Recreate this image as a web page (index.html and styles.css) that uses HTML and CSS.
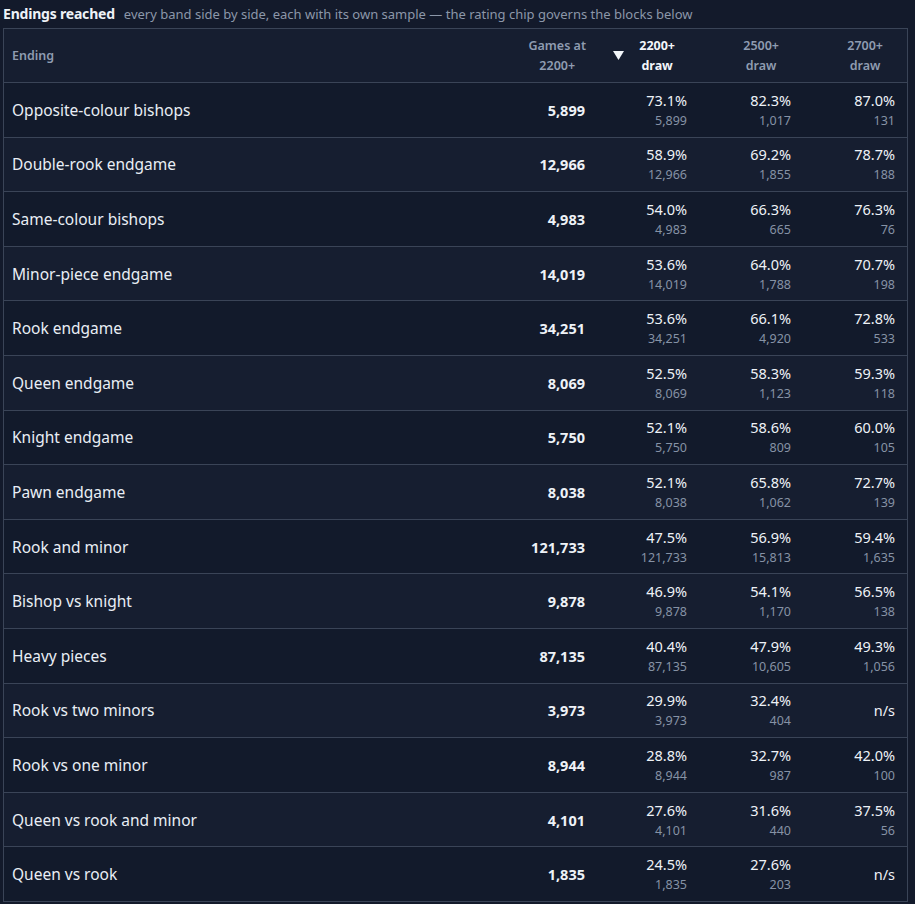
FILE: index.html
```html
<!DOCTYPE html>
<html>
<head>
<meta charset="utf-8">
<link rel="stylesheet" href="styles.css">
</head>
<body>
<div class="panel">
  <div class="title"><span class="title-main">Endings reached</span><span class="title-sub">every band side by side, each with its own sample — the rating chip governs the blocks below</span></div>
  <table class="grid">
    <thead>
      <tr>
        <th class="h-name">Ending</th>
        <th class="h-num h-games"><span class="h-txt">Games at<br>2200+</span></th>
        <th class="h-num h-draw h-active"><svg class="arrow" width="11" height="9" viewBox="0 0 11 9"><path d="M0 0 H11 L5.5 9 Z" fill="#f3f6fa"/></svg><span class="h-txt">2200+<br>draw</span></th>
        <th class="h-num h-draw"><span class="h-txt">2500+<br>draw</span></th>
        <th class="h-num h-draw"><span class="h-txt">2700+<br>draw</span></th>
      </tr>
    </thead>
    <tbody>
      <tr><td class="name">Opposite-colour bishops</td><td class="games">5,899</td><td class="pct"><div class="p">73.1%</div><div class="n">5,899</div></td><td class="pct"><div class="p">82.3%</div><div class="n">1,017</div></td><td class="pct"><div class="p">87.0%</div><div class="n">131</div></td></tr>
      <tr><td class="name">Double-rook endgame</td><td class="games">12,966</td><td class="pct"><div class="p">58.9%</div><div class="n">12,966</div></td><td class="pct"><div class="p">69.2%</div><div class="n">1,855</div></td><td class="pct"><div class="p">78.7%</div><div class="n">188</div></td></tr>
      <tr><td class="name">Same-colour bishops</td><td class="games">4,983</td><td class="pct"><div class="p">54.0%</div><div class="n">4,983</div></td><td class="pct"><div class="p">66.3%</div><div class="n">665</div></td><td class="pct"><div class="p">76.3%</div><div class="n">76</div></td></tr>
      <tr><td class="name">Minor-piece endgame</td><td class="games">14,019</td><td class="pct"><div class="p">53.6%</div><div class="n">14,019</div></td><td class="pct"><div class="p">64.0%</div><div class="n">1,788</div></td><td class="pct"><div class="p">70.7%</div><div class="n">198</div></td></tr>
      <tr><td class="name">Rook endgame</td><td class="games">34,251</td><td class="pct"><div class="p">53.6%</div><div class="n">34,251</div></td><td class="pct"><div class="p">66.1%</div><div class="n">4,920</div></td><td class="pct"><div class="p">72.8%</div><div class="n">533</div></td></tr>
      <tr><td class="name">Queen endgame</td><td class="games">8,069</td><td class="pct"><div class="p">52.5%</div><div class="n">8,069</div></td><td class="pct"><div class="p">58.3%</div><div class="n">1,123</div></td><td class="pct"><div class="p">59.3%</div><div class="n">118</div></td></tr>
      <tr><td class="name">Knight endgame</td><td class="games">5,750</td><td class="pct"><div class="p">52.1%</div><div class="n">5,750</div></td><td class="pct"><div class="p">58.6%</div><div class="n">809</div></td><td class="pct"><div class="p">60.0%</div><div class="n">105</div></td></tr>
      <tr><td class="name">Pawn endgame</td><td class="games">8,038</td><td class="pct"><div class="p">52.1%</div><div class="n">8,038</div></td><td class="pct"><div class="p">65.8%</div><div class="n">1,062</div></td><td class="pct"><div class="p">72.7%</div><div class="n">139</div></td></tr>
      <tr><td class="name">Rook and minor</td><td class="games">121,733</td><td class="pct"><div class="p">47.5%</div><div class="n">121,733</div></td><td class="pct"><div class="p">56.9%</div><div class="n">15,813</div></td><td class="pct"><div class="p">59.4%</div><div class="n">1,635</div></td></tr>
      <tr><td class="name">Bishop vs knight</td><td class="games">9,878</td><td class="pct"><div class="p">46.9%</div><div class="n">9,878</div></td><td class="pct"><div class="p">54.1%</div><div class="n">1,170</div></td><td class="pct"><div class="p">56.5%</div><div class="n">138</div></td></tr>
      <tr><td class="name">Heavy pieces</td><td class="games">87,135</td><td class="pct"><div class="p">40.4%</div><div class="n">87,135</div></td><td class="pct"><div class="p">47.9%</div><div class="n">10,605</div></td><td class="pct"><div class="p">49.3%</div><div class="n">1,056</div></td></tr>
      <tr><td class="name">Rook vs two minors</td><td class="games">3,973</td><td class="pct"><div class="p">29.9%</div><div class="n">3,973</div></td><td class="pct"><div class="p">32.4%</div><div class="n">404</div></td><td class="pct ns">n/s</td></tr>
      <tr><td class="name">Rook vs one minor</td><td class="games">8,944</td><td class="pct"><div class="p">28.8%</div><div class="n">8,944</div></td><td class="pct"><div class="p">32.7%</div><div class="n">987</div></td><td class="pct"><div class="p">42.0%</div><div class="n">100</div></td></tr>
      <tr><td class="name">Queen vs rook and minor</td><td class="games">4,101</td><td class="pct"><div class="p">27.6%</div><div class="n">4,101</div></td><td class="pct"><div class="p">31.6%</div><div class="n">440</div></td><td class="pct"><div class="p">37.5%</div><div class="n">56</div></td></tr>
      <tr><td class="name">Queen vs rook</td><td class="games">1,835</td><td class="pct"><div class="p">24.5%</div><div class="n">1,835</div></td><td class="pct"><div class="p">27.6%</div><div class="n">203</div></td><td class="pct ns">n/s</td></tr>
    </tbody>
  </table>
</div>
</body>
</html>
```
FILE: styles.css
```css
html, body {
  margin: 0;
  padding: 0;
  background: #131a2b;
}
body {
  font-family: "Noto Sans", "Open Sans", sans-serif;
  color: #e6ebf2;
}
.panel {
  padding: 4px 7px 0 3px;
}
.title {
  display: flex;
  align-items: baseline;
  gap: 9px;
  height: 24px;
  white-space: nowrap;
}
.title-main {
  font-size: 14px;
  font-weight: 700;
  letter-spacing: -0.2px;
  color: #eef2f7;
}
.title-sub {
  font-size: 13px;
  color: #8c97a9;
}
.grid {
  width: 100%;
  border-collapse: collapse;
  border: 1px solid #3a4457;
  background: #151d2f;
}
.grid th {
  height: 53px;
  padding: 0 12px;
  font-size: 12.5px;
  font-weight: 600;
  color: #8f9cb1;
  line-height: 20px;
  border-bottom: 1px solid #3a4457;
  background: #161e30;
}
.h-name {
  text-align: left;
  padding-left: 8px !important;
}
.h-num {
  text-align: right;
}
.h-txt {
  display: inline-block;
  text-align: center;
  vertical-align: middle;
}
.h-games {
  width: 120px;
}
.h-games .h-txt {
  margin-right: -3px;
}
.h-draw {
  width: 80px;
}
.h-draw .h-txt {
  margin-right: 12px;
}
.h-active {
  color: #f3f6fa !important;
  font-weight: 700 !important;
}
.arrow {
  display: inline-block;
  vertical-align: middle;
  margin-right: 15px;
}
.grid td {
  height: 53.6px;
  padding: 0 12px;
  border-bottom: 1px solid #3a4457;
  vertical-align: middle;
}
.grid tbody tr:nth-child(even) td {
  background: #161e30;
}
.grid tbody tr:nth-child(odd) td {
  background: #121a2b;
}
.name {
  font-size: 15.5px;
  padding-left: 8px !important;
  color: #e9eef5;
}
.games {
  text-align: right;
  font-size: 14.5px;
  font-weight: 700;
  color: #eef2f7;
  padding-right: 10px !important;
}
.pct {
  text-align: right;
}
.p {
  font-size: 14.5px;
  line-height: 20px;
  color: #eef2f7;
}
.n {
  font-size: 12.5px;
  line-height: 18px;
  margin-top: 2px;
  color: #8692a5;
}
.ns {
  font-size: 14.5px;
  color: #eef2f7;
}
```
